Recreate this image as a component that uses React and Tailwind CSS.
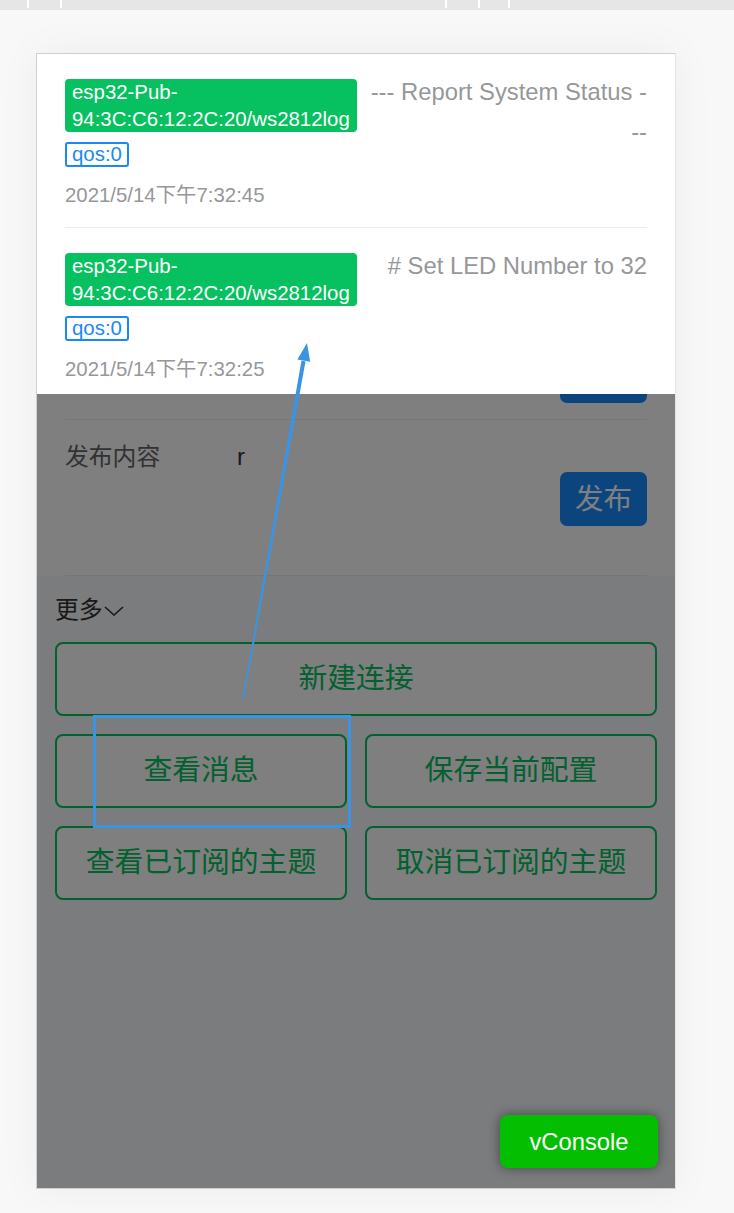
import React from "react";

const messages = [
  {
    topic: ["esp32-Pub-", "94:3C:C6:12:2C:20/ws2812log"],
    qos: 0,
    time: "2021/5/14下午7:32:45",
    body: ["--- Report System Status -", "--"],
  },
  {
    topic: ["esp32-Pub-", "94:3C:C6:12:2C:20/ws2812log"],
    qos: 0,
    time: "2021/5/14下午7:32:25",
    body: ["# Set LED Number to 32"],
  },
];

function MessageItem({ msg }) {
  return (
    <div className="flex border-b border-[#ebedf0] pt-[18px] pb-[20px]">
      <div className="w-[300px] shrink-0 pt-[7px] flex flex-col items-start">
        <span className="inline-block bg-[#07c160] text-white text-[20.4px] leading-[26.5px] px-[7px] rounded-[4px] whitespace-nowrap">
          {msg.topic[0]}
          <br />
          {msg.topic[1]}
        </span>
        <span className="mt-[10px] inline-block border-2 border-[#1989fa] text-[#1989fa] text-[20.4px] leading-[21px] px-[5px] rounded-[3px]">
          qos:{msg.qos}
        </span>
        <span className="mt-[16px] text-[20.4px] leading-[24px] text-[#969799]">{msg.time}</span>
      </div>
      <div className="flex-1 min-w-0 text-right text-[23.8px] leading-[40px] text-[#969799]">
        {msg.body.map((line, i) => (
          <div key={i} className="whitespace-nowrap">
            {line}
          </div>
        ))}
      </div>
    </div>
  );
}

function OutlineButton({ children, wide }) {
  return (
    <button
      className={
        "h-[74px] border-2 border-[#07c160] rounded-[8px] bg-white text-[#07c160] text-[28.8px] " +
        (wide ? "col-span-2" : "")
      }
    >
      {children}
    </button>
  );
}

export default function App() {
  return (
    <div className="relative min-h-screen bg-[#f8f8f8] font-['Liberation_Sans','Noto_Sans_CJK_SC',sans-serif] pb-[24px]">
      {/* browser strip */}
      <div className="h-[10px] bg-[#e6e6e6] flex items-start">
        <div className="ml-[27px] w-[2px] h-[8px] bg-white" />
        <div className="ml-[31px] w-[2px] h-[8px] bg-white" />
        <div className="ml-[383px] w-[2px] h-[8px] bg-white" />
        <div className="ml-[31px] w-[2px] h-[8px] bg-white" />
        <div className="ml-[28px] w-[2px] h-[8px] bg-white" />
      </div>

      <div className="relative ml-[36px] mt-[43px] w-[640px] h-[1136px] border border-[#cfcfcf] border-r-[#e4e4e4] bg-white overflow-hidden shadow-[0_0_40px_rgba(0,0,0,0.05)]">
        {/* page under the mask */}
        <div className="h-full flex flex-col">
          <div className="bg-white">
            <div className="mx-[28px] h-[366px] border-b border-[#ebedf0] flex items-end justify-end pb-[16px]">
              <button className="w-[87px] h-[54px] rounded-[7px] bg-[#1989fa]" />
            </div>
            <div className="mx-[28px] h-[156px] border-b border-[#ebedf0] pt-[20px] flex flex-col">
              <div className="flex leading-[34px]">
                <span className="w-[172px] text-[23.8px] text-[#646566]">发布内容</span>
                <span className="text-[23.8px] text-[#323233]">r</span>
              </div>
              <button className="self-end mt-[-2px] w-[87px] h-[54px] rounded-[7px] bg-[#1989fa] text-white text-[28.5px]">
                发布
              </button>
            </div>
          </div>
          <div className="flex-1 bg-[#f7f8fa] px-[18px] pt-[17px]">
            <div className="flex items-center h-[34px] text-[23.8px] text-[#323233]">
              更多
              <svg width="20" height="10" viewBox="0 0 20 10" className="ml-[1px] mt-[1px]">
                <polyline points="1,1 10,9 19,1" fill="none" stroke="#323233" strokeWidth="1.6" />
              </svg>
            </div>
            <div className="mt-[15px] grid grid-cols-2 gap-[18px]">
              <OutlineButton wide>新建连接</OutlineButton>
              <OutlineButton>查看消息</OutlineButton>
              <OutlineButton>保存当前配置</OutlineButton>
              <OutlineButton>查看已订阅的主题</OutlineButton>
              <OutlineButton>取消已订阅的主题</OutlineButton>
            </div>
          </div>
        </div>

        {/* mask */}
        <div className="absolute inset-0 bg-black/50" />

        {/* message popup */}
        <div className="absolute top-0 inset-x-0 h-[340px] bg-white overflow-hidden px-[28px]">
          {messages.map((m, i) => (
            <MessageItem key={i} msg={m} />
          ))}
        </div>

        {/* vConsole switch */}
        <button className="absolute right-[17px] bottom-[20px] w-[158px] h-[53px] rounded-[8px] bg-[#04be02] text-white text-[23.8px] shadow-[0_0_12px_rgba(0,0,0,0.45)]">
          vConsole
        </button>
      </div>

      {/* screenshot annotation */}
      <svg className="absolute top-0 left-0 pointer-events-none" width="734" height="1213">
        <polygon points="242.2,699.9 243.8,700.1 305.5,361.4 301.5,360.6" fill="#3b94e3" />
        <polygon points="307,343 297.4,359.6 310.2,361.8" fill="#3b94e3" />
        <rect x="94.5" y="716.5" width="255" height="110" fill="none" stroke="#3b94e3" strokeWidth="3" />
      </svg>
    </div>
  );
}
